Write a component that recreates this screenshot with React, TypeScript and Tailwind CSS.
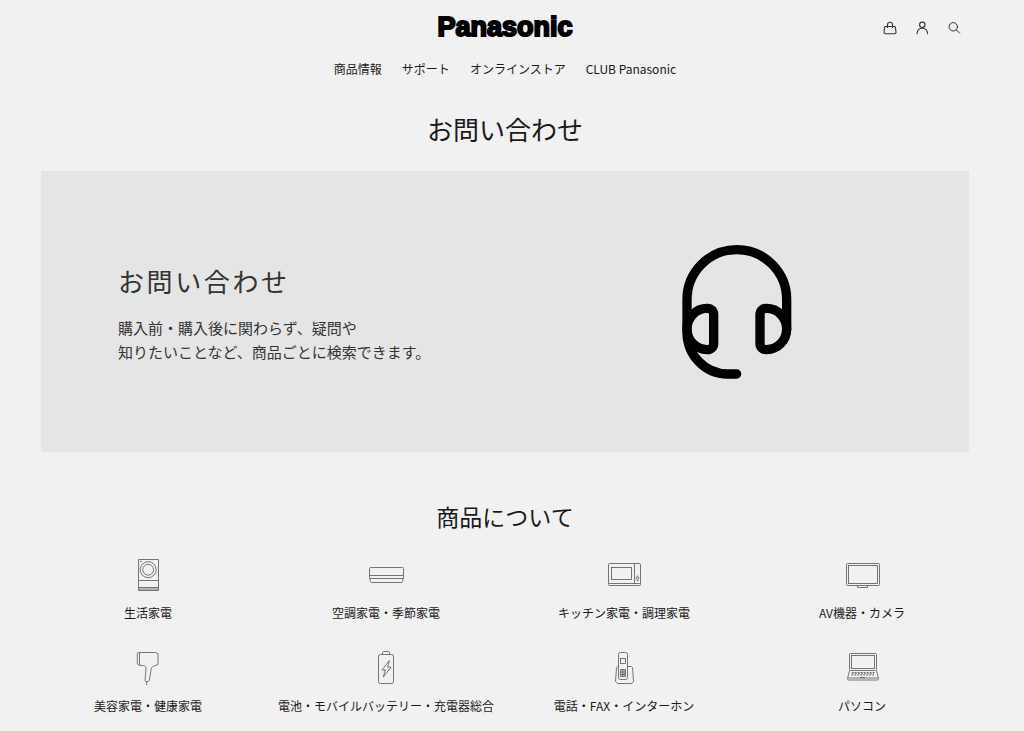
import React from "react";

const navLinks = ["商品情報", "サポート", "オンラインストア", "CLUB Panasonic"];

const categories = [
  {
    label: "生活家電",
    icon: (
      <>
        <path d="M8.5 2.5h20v31h-20zM8.5 23.5h20M8.5 30.5h20M9 32h19" />
        <circle cx="18.2" cy="12.7" r="8" />
        <circle cx="18.2" cy="12.7" r="5.4" />
        <path d="M10 4.5h2" />
      </>
    ),
  },
  {
    label: "空調家電・季節家電",
    icon: (
      <>
        <path d="M2.5 10.5h32a1 1 0 0 1 1 1v9l-1 4a1 1 0 0 1-1 1h-30a1 1 0 0 1-1-1l-1-4v-9a1 1 0 0 1 1-1z" />
        <path d="M1.5 18.5h34M1.5 21.5h34" />
      </>
    ),
  },
  {
    label: "キッチン家電・調理家電",
    icon: (
      <>
        <rect x="2.5" y="6.5" width="32" height="20" rx="1" />
        <path d="M2.5 26v1.5a1 1 0 0 0 1 1h30a1 1 0 0 0 1-1V26M28.5 6.5v20" />
        <rect x="5.5" y="10.5" width="20" height="12" />
        <circle cx="31.5" cy="21" r="1.3" />
        <path d="M30.5 23.5h2M31.5 18.5v1" />
      </>
    ),
  },
  {
    label: "AV機器・カメラ",
    icon: (
      <>
        <rect x="2.5" y="6.5" width="33" height="22" rx="1" />
        <rect x="4.5" y="8.5" width="29" height="18" />
        <path d="M13.5 28.5v2h10v-2" />
      </>
    ),
  },
  {
    label: "美容家電・健康家電",
    icon: (
      <>
        <path d="M8.5 2.5H25l3 1v11l-3 1.2c-2 .5-3.4 1.3-3.7 3L19.2 30.5c-.3 1.5-4 1.7-4.2 0l1-11.5c.1-2-.7-3.1-2.5-3.3l-5-.7c-1-.5-1.2-1-1.2-2v-9c0-1 .4-1.500 1.200-1.500z" />
        <path d="M9.5 2.5v12.5M16.7 31.5v3.5" />
      </>
    ),
  },
  {
    label: "電池・モバイルバッテリー・充電器総合",
    icon: (
      <>
        <rect x="10.5" y="4.5" width="15" height="29" rx="2" />
        <path d="M14.5 4.5v-2a1 1 0 0 1 1-1h5a1 1 0 0 1 1 1v2" />
        <path d="M21.3 10.5L14 20h3.3l-2 7L23 17.2h-3.300z" />
      </>
    ),
  },
  {
    label: "電話・FAX・インターホン",
    icon: (
      <>
        <path d="M12.5 16.5h-1l-1 1-1 14 2 2h14l2-2-1-14-1-1h-4" />
        <rect x="12.5" y="2.5" width="9" height="27" rx="2" />
        <rect x="14.5" y="8.5" width="5" height="5" />
        <path d="M14.5 19.5h5v7h-5zM14.5 22h5M14.5 24.5h5M16.3 19.5v7M18 19.5v7" />
      </>
    ),
  },
  {
    label: "パソコン",
    icon: (
      <>
        <rect x="5.5" y="3.5" width="27" height="17" rx="1" />
        <rect x="7.5" y="5.5" width="23" height="13" />
        <path d="M5.5 20.5l-2 8c0 1 .3 1.5 1 1.5h29c.7 0 1-.5 1-1.5l-2-8M4 28h30M16 27.5h5" />
        <path d="M7.5 22.5h23M7 25h24M8 23.7h22" strokeDasharray="2 1" />
      </>
    ),
  },
];

function Header() {
  return (
    <header>
      <div className="grid grid-cols-[1fr_auto_1fr] items-center pt-[9px]">
        <a
          href="#"
          className="col-start-2 font-['Liberation_Sans',Arial,sans-serif] text-[27px] leading-9 font-bold text-black [-webkit-text-stroke:2px_black]"
        >
          Panasonic
        </a>
        <div className="flex justify-end gap-4 pt-0.5 pr-[19px] text-[#333]">
          <button type="button" aria-label="カート">
            <svg className="size-4" viewBox="0 0 16 16" fill="none" stroke="currentColor" strokeWidth="1.1" strokeLinejoin="round">
              <path d="M3.5 6.5h9c.5 0 .8.3.9.8l.6 4.7c.1 1-.5 1.7-1.5 1.7h-9c-1 0-1.6-.7-1.5-1.7l.6-4.7c.1-.5.4-.8.9-.8z" />
              <path d="M5.5 8V4.5A2.3 2.3 0 0 1 8 2.2a2.3 2.3 0 0 1 2.5 2.3V8" />
            </svg>
          </button>
          <button type="button" aria-label="アカウント">
            <svg className="size-4" viewBox="0 0 16 16" fill="none" stroke="currentColor" strokeWidth="1.1" strokeLinecap="round">
              <circle cx="8.3" cy="4.8" r="2.7" />
              <path d="M3 13.7c.2-3.4 2.3-5.5 5.3-5.5s5.1 2.1 5.3 5.5" />
            </svg>
          </button>
          <button type="button" aria-label="検索">
            <svg className="size-4" viewBox="0 0 16 16" fill="none" stroke="currentColor" strokeLinecap="round">
              <circle cx="7.3" cy="6.8" r="4.2" />
              <path d="M10.4 9.9l3.2 3.2" />
            </svg>
          </button>
        </div>
      </div>
      <nav className="mt-[15px] flex justify-center gap-5 text-[12px] leading-[18px]">
        {navLinks.map((link) => (
          <a key={link} href="#">
            {link}
          </a>
        ))}
      </nav>
    </header>
  );
}

function Hero() {
  return (
    <section className="mx-3 mt-[22px] grid grid-cols-2 items-center bg-[#e5e5e5] py-[72px] text-[#333]">
      <div className="pt-0.5 pl-[77px]">
        <h2 className="text-[26px] leading-10 tracking-widest whitespace-nowrap">お問い合わせ</h2>
        <p className="mt-[15px] text-[15px] leading-6 whitespace-nowrap">
          購入前・購入後に関わらず、疑問や
          <br />
          知りたいことなど、商品ごとに検索できます。
        </p>
      </div>
      <svg
        className="h-[137px] w-28 justify-self-center"
        viewBox="65 40 336 411"
        fill="none"
        stroke="black"
        strokeWidth="28"
        strokeLinecap="round"
      >
        <path d="M382 300V209.5A149.5 149.5 0 0 0 83 209.5V306C83 376 136 433 205 433H232" />
        <path d="M143 236H145A18 18 0 0 1 163 254V342A18 18 0 0 1 145 360H143A60 62 0 0 1 143 236Z" />
        <path d="M322 236H320A18 18 0 0 0 302 254V342A18 18 0 0 0 320 360H322A60 62 0 0 0 322 236Z" />
      </svg>
    </section>
  );
}

export default function App() {
  return (
    <div className="min-h-screen bg-[#f1f1f1] pr-[14px] pb-4 font-['Noto_Sans_CJK_JP',sans-serif] text-[#1a1a1a]">
      <div className="px-[29px]">
        <Header />
        <main>
          <h1 className="mt-[31px] text-center text-[26px] leading-10">お問い合わせ</h1>
          <Hero />
          <section>
            <h2 className="mt-[46px] text-center text-[23px] leading-9">商品について</h2>
            <ul className="mt-[23px] grid grid-cols-4 gap-y-[25px]">
              {categories.map(({ label, icon }) => (
                <li key={label}>
                  <a href="#" className="flex flex-col items-center gap-[7px]">
                    <svg className="size-9" viewBox="0 0 36 36" fill="none" stroke="#555" strokeWidth="0.8" overflow="visible">
                      {icon}
                    </svg>
                    <span className="text-[12px] leading-[25px] whitespace-nowrap">{label}</span>
                  </a>
                </li>
              ))}
            </ul>
          </section>
        </main>
      </div>
    </div>
  );
}
